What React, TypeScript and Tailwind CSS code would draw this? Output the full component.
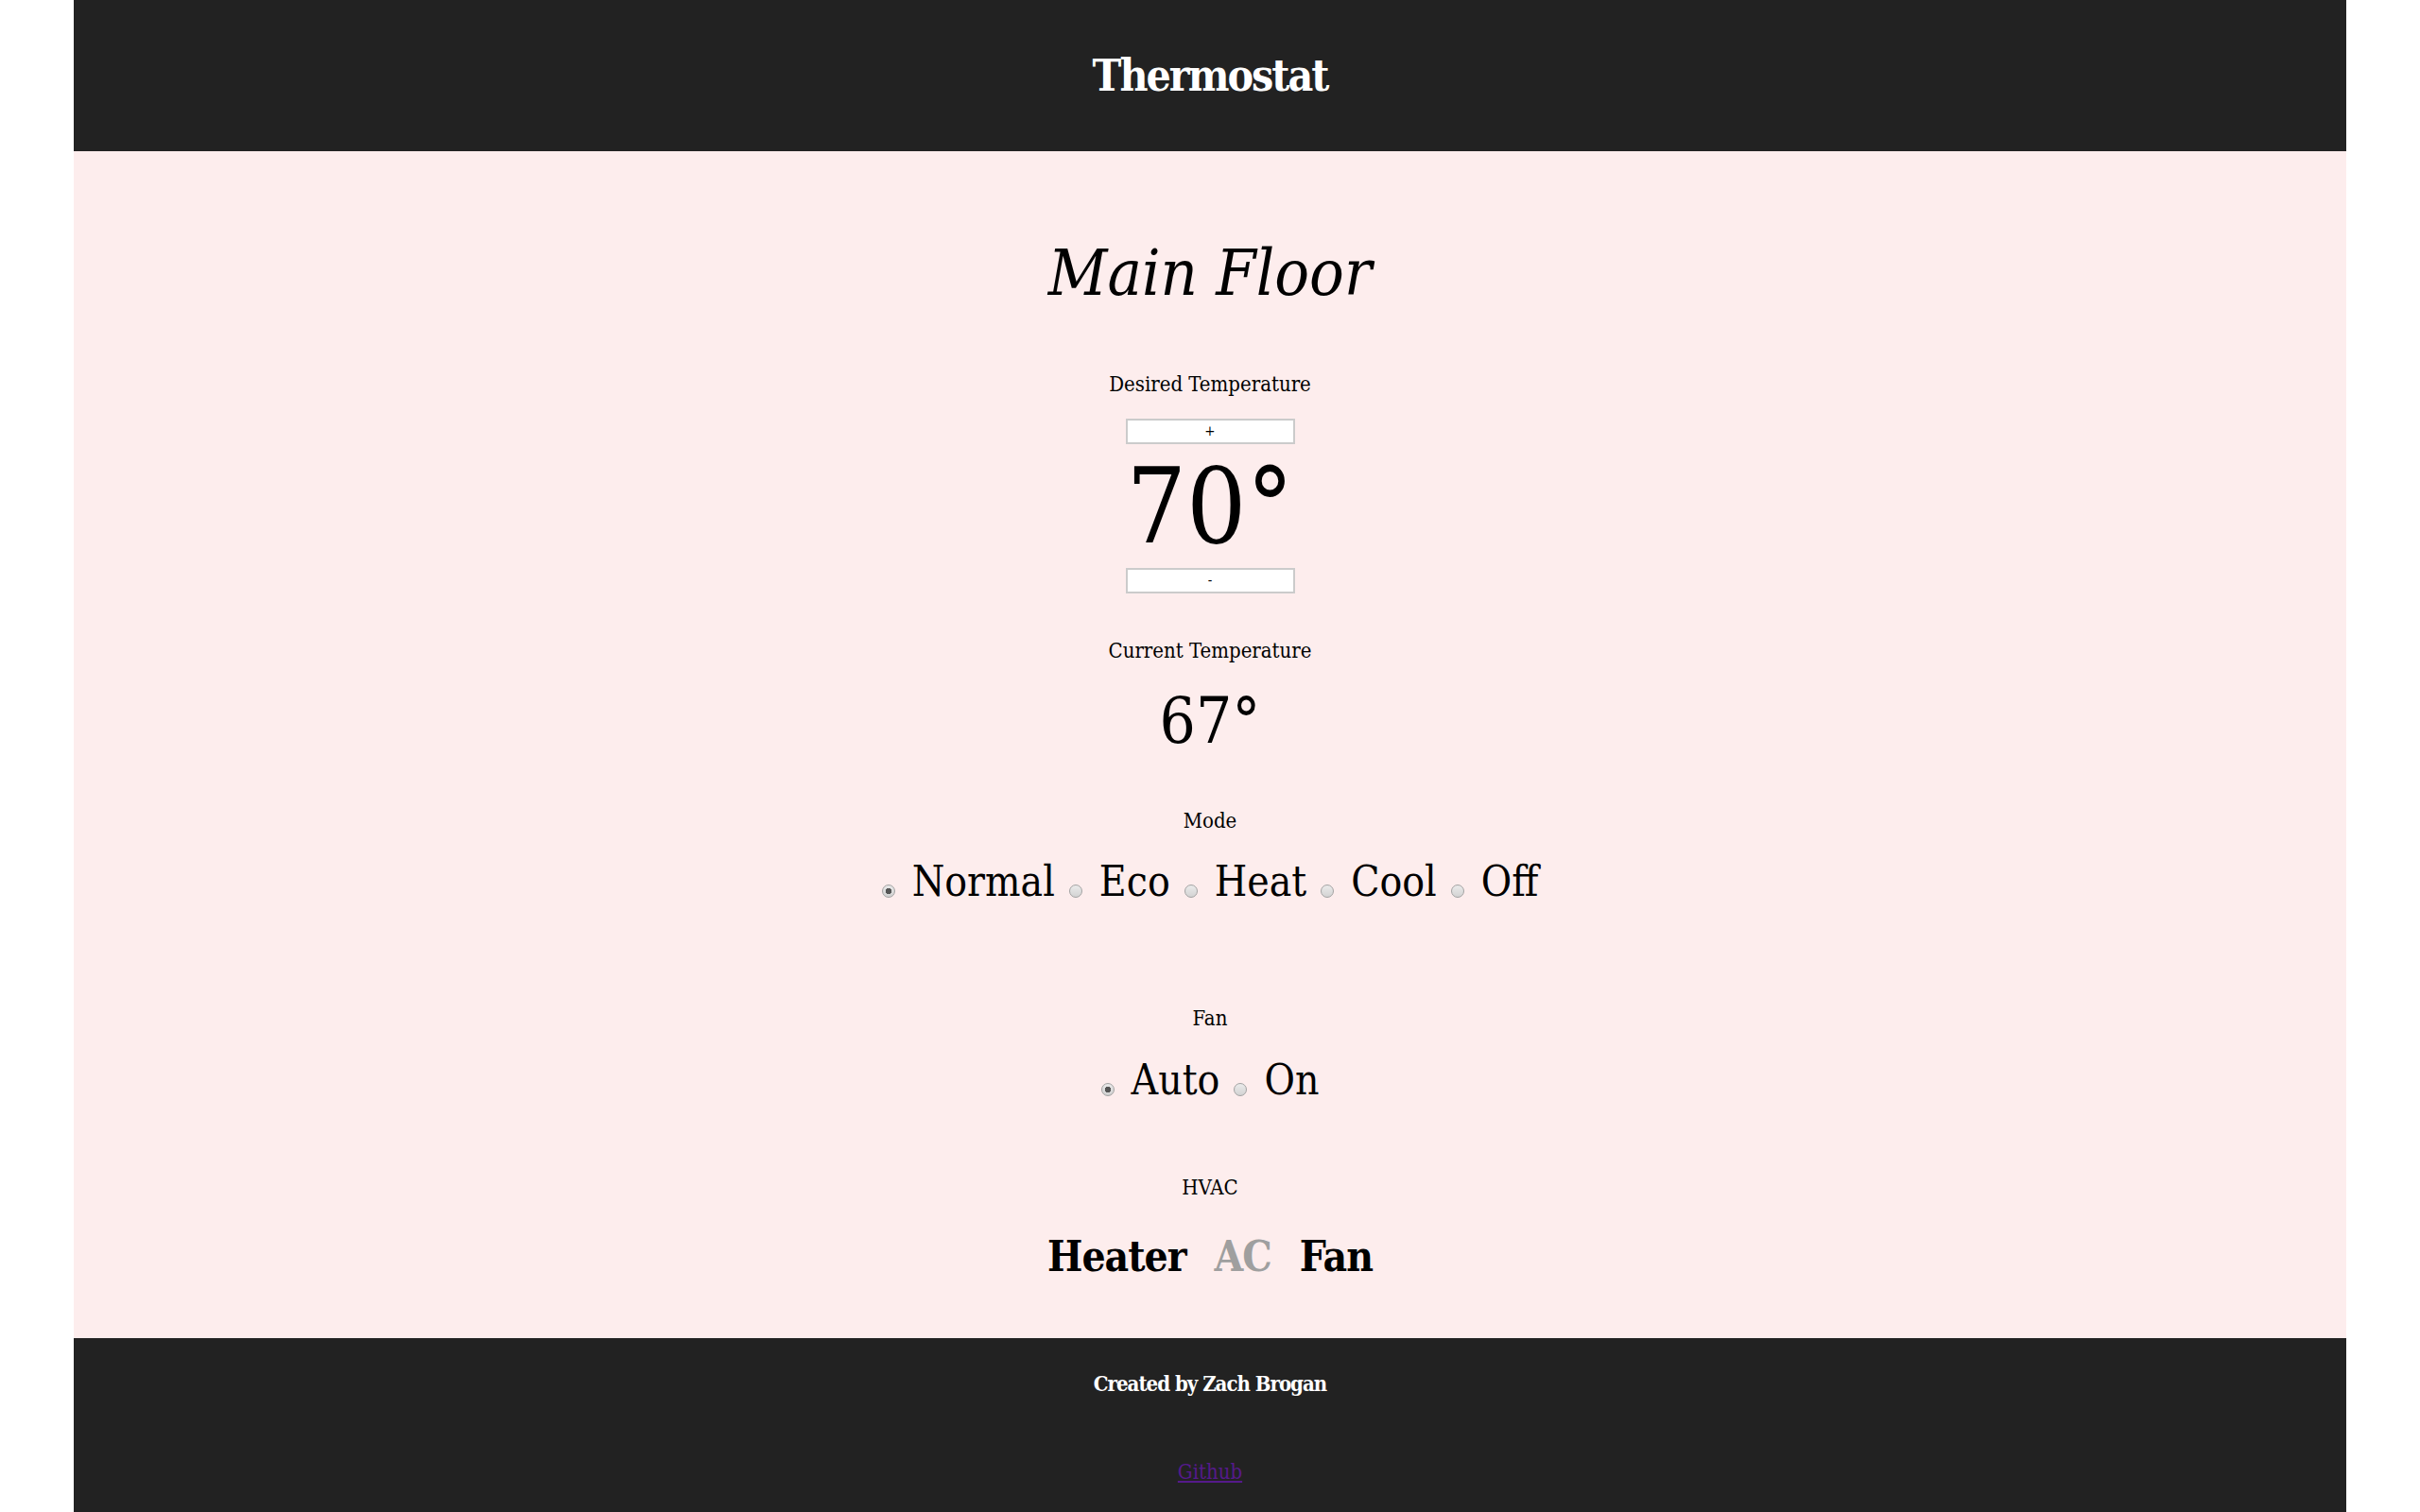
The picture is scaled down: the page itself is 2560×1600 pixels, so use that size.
import React from "react";

const serif = "font-['DejaVu_Serif_Condensed','DejaVu_Serif',serif] [font-stretch:condensed]";

type Option = { label: string; checked?: boolean };

const modes: Option[] = [
  { label: "Normal", checked: true },
  { label: "Eco" },
  { label: "Heat" },
  { label: "Cool" },
  { label: "Off" },
];

const fanModes: Option[] = [{ label: "Auto", checked: true }, { label: "On" }];

function Radio({ checked, first }: { checked?: boolean; first?: boolean }) {
  return (
    <span
      className={`inline-block h-[14px] w-[14px] rounded-full border-[1.5px] border-[#a2a2a2] align-[-2px] ${
        checked
          ? "bg-[radial-gradient(circle,#555555_0_3px,transparent_3.5px),linear-gradient(180deg,#e9e9e9_0%,#d0d0d0_100%)]"
          : "bg-[linear-gradient(180deg,#ebebeb_0%,#d3d3d3_100%)]"
      } ${first ? "" : "ml-[15px]"} mr-[18px]`}
    />
  );
}

function RadioRow({ options }: { options: Option[] }) {
  return (
    <div className="text-[44px] leading-none whitespace-nowrap">
      {options.map((o, i) => (
        <React.Fragment key={o.label}>
          <Radio checked={o.checked} first={i === 0} />
          <span>{o.label}</span>
        </React.Fragment>
      ))}
    </div>
  );
}

function Label({ children, className = "" }: { children: React.ReactNode; className?: string }) {
  return <p className={`text-[22px] leading-none ${className}`}>{children}</p>;
}

function StepButton({ children }: { children: React.ReactNode }) {
  return (
    <button className="flex h-[27px] w-[179px] items-center justify-center border-2 border-[#cbcbcb] bg-white text-[15px] leading-none text-black">
      {children}
    </button>
  );
}

export default function App() {
  return (
    <div className={`min-h-screen bg-white px-[78px] text-black ${serif}`}>
      <header className="flex h-[160px] items-center justify-center bg-[#222222]">
        <h1 className="text-[46px] font-bold leading-none tracking-[-2px] text-white">Thermostat</h1>
      </header>

      <main className="flex flex-col items-center bg-[#fdeded] pb-[64px] pt-[95px]">
        <h2 className="text-[68px] italic leading-none">Main Floor</h2>

        <Label className="mt-[73px]">Desired Temperature</Label>
        <div className="mt-[25px]">
          <StepButton>+</StepButton>
        </div>
        <div className="mt-[10px] text-[111px] leading-none">70°</div>
        <div className="mt-[10px]">
          <StepButton>-</StepButton>
        </div>

        <Label className="mt-[50px]">Current Temperature</Label>
        <div className="mt-[30px] text-[67px] leading-none">67°</div>

        <Label className="mt-[61px]">Mode</Label>
        <div className="mt-[31px]">
          <RadioRow options={modes} />
        </div>

        <Label className="mt-[112px]">Fan</Label>
        <div className="mt-[32px]">
          <RadioRow options={fanModes} />
        </div>

        <Label className="mt-[81px]">HVAC</Label>
        <div className="mt-[40px] flex items-baseline gap-[30px] text-[44px] font-bold leading-none tracking-[-1px]">
          <span>Heater</span>
          <span className="text-[#9f9f9f]">AC</span>
          <span>Fan</span>
        </div>
      </main>

      <footer className="flex flex-col items-center bg-[#222222] pb-[40px] pt-[37px]">
        <p className="text-[22px] font-bold leading-none tracking-[-1px] text-white">Created by Zach Brogan</p>
        <a href="#" className="mt-[72px] text-[22px] leading-none text-[#551a8b] underline">
          Github
        </a>
      </footer>
    </div>
  );
}
